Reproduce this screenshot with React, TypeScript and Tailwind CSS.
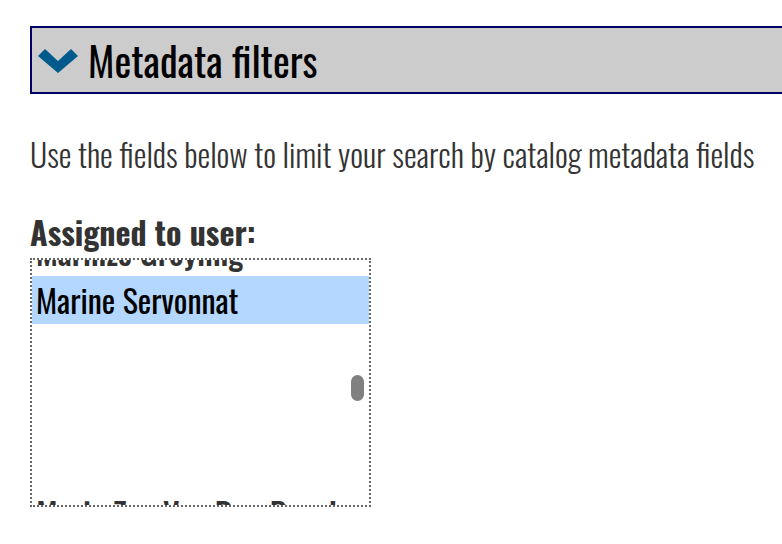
const users = [
  { name: 'Marinze Groyling', selected: false },
  { name: 'Marine Servonnat', selected: true },
];

function Chevron() {
  return (
    <svg width="40" height="25" viewBox="0 0 40 25" className="shrink-0">
      <path d="M0 8 L7 1 L20 13 L33 1 L40 8 L20 25 Z" fill="#005a8c" />
    </svg>
  );
}

export default function App() {
  return (
    <div className="min-h-screen w-full overflow-hidden bg-white pl-[30px] pt-[26px] font-[Oswald,sans-serif]">
      <div className="flex h-[68px] w-[800px] items-center gap-[10px] border-2 border-[#000066] bg-[#cccccc] pl-[6px]">
        <Chevron />
        <h2 className="text-[40px] leading-none text-black">Metadata filters</h2>
      </div>

      <p className="mt-[40px] text-[32px] font-light leading-[40px] text-[#333333]">
        Use the fields below to limit your search by catalog metadata fields
      </p>

      <label className="mt-[40px] block text-[32px] font-bold leading-[36px] text-[#333333]">
        Assigned to user:
      </label>

      <div className="relative mt-[8px] h-[249px] w-[341px] overflow-hidden border-2 border-dotted border-[#666666] bg-white">
        <ul className="-mt-[32px]">
          {users.map((u, i) => (
            <li
              key={i}
              className={`h-[48px] px-[4px] text-[32px] leading-[48px] ${
                u.selected ? 'bg-[#b3d7ff] text-black' : 'font-medium text-[#333333]'
              }`}
            >
              {u.name}
            </li>
          ))}
          <li className="h-[165px]" />
          <li className="h-[48px] px-[4px] text-[32px] font-medium leading-[48px] text-[#333333]">
            Marie Zoe Van Den Bosch
          </li>
        </ul>
        <div className="absolute right-[5px] top-[115px] h-[26px] w-[13px] rounded-full bg-[#808080]" />
      </div>
    </div>
  );
}
